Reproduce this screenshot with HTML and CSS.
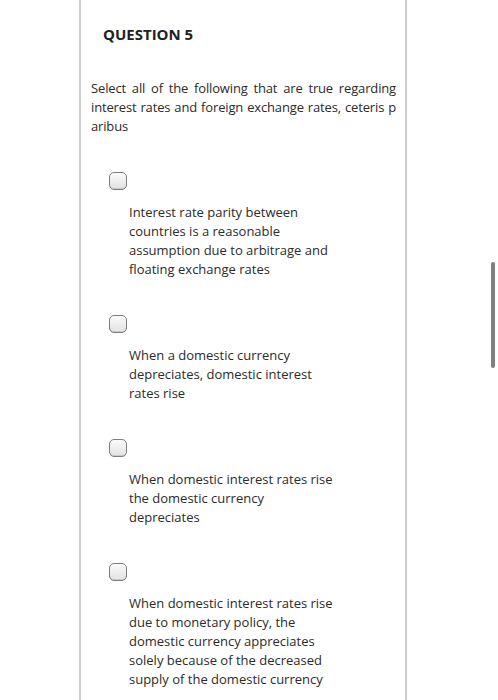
FILE: index.html
```html
<!DOCTYPE html>
<html lang="en">
<head>
    <meta charset="UTF-8">
    <meta name="viewport" content="width=device-width, initial-scale=1.0">
    <title>Question 5</title>
    <link rel="stylesheet" href="styles.css">
</head>
<body>

<div class="panel">
    <h2 class="q-title">QUESTION 5</h2>
    <p class="prompt">Select all of the following that are true regarding interest rates and foreign exchange rates, ceteris p<wbr>aribus</p>

    <ul class="choices">
        <li class="choice">
            <span class="box"></span>
            <div class="choice-text">Interest rate parity between countries is a reasonable assumption due to arbitrage and floating exchange rates</div>
        </li>
        <li class="choice">
            <span class="box"></span>
            <div class="choice-text">When a domestic currency depreciates, domestic interest rates rise</div>
        </li>
        <li class="choice">
            <span class="box"></span>
            <div class="choice-text">When domestic interest rates rise the domestic currency depreciates</div>
        </li>
        <li class="choice">
            <span class="box"></span>
            <div class="choice-text">When domestic interest rates rise due to monetary policy, the domestic currency appreciates solely because of the decreased supply of the domestic currency</div>
        </li>
    </ul>
</div>

<div class="scroll-thumb"></div>

</body>
</html>
```

FILE: styles.css
```css
body {
    margin: 0;
    background-color: #ffffff;
    font-family: "Open Sans", "Noto Sans", Arial, sans-serif;
    color: #2b2b2b;
    overflow: hidden;
}
.panel {
    box-sizing: border-box;
    width: 328px;
    min-height: 700px;
    margin-left: 79px;
    padding: 24px 9px 0 10px;
    border-left: 2px solid #cdcdcd;
    border-right: 2px solid #cdcdcd;
}
.q-title {
    margin: 0 0 35px 12px;
    font-size: 15px;
    line-height: 20px;
    font-weight: 700;
    color: #222;
}
.prompt {
    margin: 0;
    font-size: 13px;
    line-height: 19px;
    letter-spacing: -0.15px;
    text-align: justify;
}
.choices {
    list-style: none;
    margin: 36px 0 0 0;
    padding: 0;
}
.choice {
    display: flex;
    flex-direction: column;
    gap: 13px;
    margin-bottom: 36px;
}
.box {
    box-sizing: border-box;
    width: 18px;
    height: 18px;
    margin-left: 18px;
    border: 1px solid #7d7d7d;
    border-radius: 5px;
    background: linear-gradient(#fbfbfb, #e2e2e2);
    box-shadow: inset 0 -1px 0 #c9c9c9;
}
.choice-text {
    width: 206px;
    margin-left: 38px;
    font-size: 13px;
    line-height: 19px;
}
.scroll-thumb {
    position: fixed;
    top: 262px;
    left: 491px;
    width: 4px;
    height: 106px;
    border-radius: 2px;
    background-color: #808080;
}
```
